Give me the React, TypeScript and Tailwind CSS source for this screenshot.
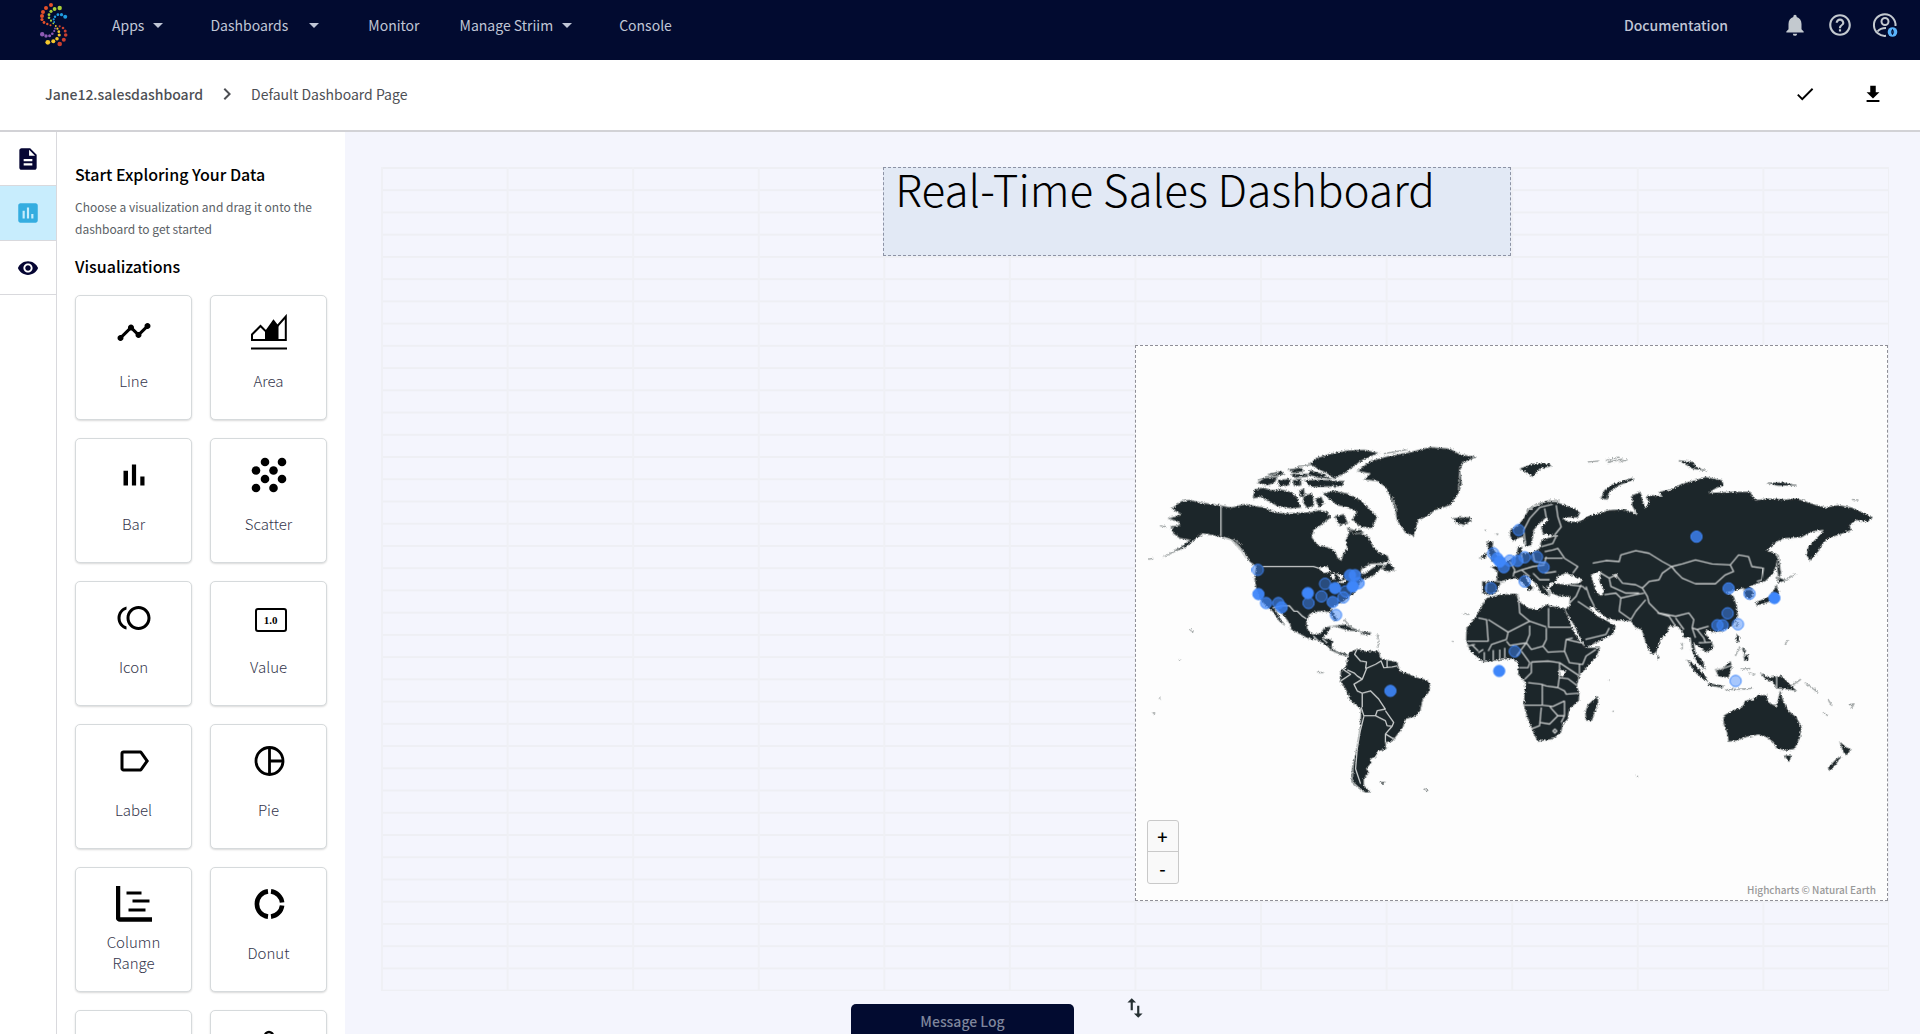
import React from 'react';
import {
  MdArrowDropDown,
  MdCheck,
  MdChevronRight,
  MdDescription,
  MdHelpOutline,
  MdInsertChart,
  MdLabelOutline,
  MdNotifications,
  MdSwapVert,
  MdTimeline,
  MdToll,
  MdVisibility,
} from 'react-icons/md';

const LOGO_DOTS: { color: string; dots: number[][] }[] = [
  { color: '#e4502a', dots: [[51, 5, 2], [46, 8, 2], [43, 12, 2], [42, 16, 2], [42, 19.5, 1.6], [44, 22.5, 1.4], [47.3, 24, 1.2], [50.5, 25.3, 1]] },
  { color: '#a9cf38', dots: [[59.7, 8, 2.2], [54.6, 9, 1.9], [51, 11.3, 1.6], [49, 14.7, 1.4], [49, 17.7, 1.3], [51, 20.7, 1.1], [53.3, 23.3, 0.9]] },
  { color: '#1f9be0', dots: [[65.2, 16.7, 2], [61.5, 14.7, 1.6], [57.9, 14.7, 1.4], [55, 16.7, 1.2], [53.7, 19.3, 1.1], [54.2, 22, 0.9]] },
  { color: '#8f5bb5', dots: [[42.2, 34.3, 2.2], [46, 36, 1.7], [49.6, 35.7, 1.5], [52.3, 33.7, 1.3], [54.2, 31, 1.1], [55, 28.5, 0.9]] },
  { color: '#f4c72c', dots: [[47.8, 42.3, 2.4], [53.3, 41.3, 2], [57, 38.7, 1.8], [59.2, 35, 1.6], [58.8, 31.7, 1.4], [57.4, 28.7, 1.1], [55.8, 26, 0.9]] },
  { color: '#c9402f', dots: [[59.7, 44, 2.3], [63.8, 39.7, 2], [65.7, 35, 1.8], [65.2, 31, 1.5], [63, 28, 1.3], [59.7, 26.3, 1.1]] },
];

function Logo() {
  return (
    <svg viewBox="39 2 29 45" className="h-[45px] w-[29px]" aria-hidden="true">
      {LOGO_DOTS.map((g) => (
        <g key={g.color} fill={g.color}>
          {g.dots.map(([x, y, r], i) => (
            <circle key={i} cx={x} cy={y} r={r} />
          ))}
        </g>
      ))}
    </svg>
  );
}

function NavItem({ label, menu, className = '' }: { label: string; menu?: boolean; className?: string }) {
  return (
    <button type="button" className={`flex items-center text-sm text-[#c0c6d6] ${className}`}>
      <span>{label}</span>
      {menu ? <MdArrowDropDown className="size-6" /> : null}
    </button>
  );
}

function UserIcon() {
  return (
    <svg viewBox="0 0 26 26" className="size-[26px]" fill="none" stroke="#c3c9cf" strokeWidth="2">
      <path d="M23.500 14A10.800 10.800 0 1 0 14 23.800" />
      <circle cx="13" cy="9.500" r="3.500" />
      <path d="M5.500 19.500c2-2.600 4.600-3.500 8.500-3.500" />
      <circle cx="20.500" cy="20" r="4.800" fill="#5ab4fb" stroke="none" />
      <path d="M20.500 16.800l-1.700 3h3.400zM20.500 23.200l1.700-3h-3.400z" fill="#020b30" stroke="none" />
    </svg>
  );
}

function TopBar() {
  return (
    <header className="flex h-[60px] shrink-0 items-center bg-[#020b30] pr-[22px] pb-[11px] pl-[39px]">
      <Logo />
      <nav className="flex items-center">
        <NavItem label="Apps" menu className="ml-11 gap-[2px]" />
        <NavItem label="Dashboards" menu className="ml-10 gap-[14px]" />
        <NavItem label="Monitor" className="ml-[42px]" />
        <NavItem label="Manage Striim" menu className="ml-10 gap-[2px]" />
        <NavItem label="Console" className="ml-10" />
      </nav>
      <a href="#docs" className="ml-auto text-sm font-medium text-[#c0c6d6]">
        Documentation
      </a>
      <div className="ml-[54px] flex items-center gap-[19px] text-[#c3c9cf]">
        <button type="button" aria-label="Notifications">
          <MdNotifications className="size-[26px]" />
        </button>
        <button type="button" aria-label="Help">
          <MdHelpOutline className="size-[26px]" />
        </button>
        <button type="button" aria-label="Account">
          <UserIcon />
        </button>
      </div>
    </header>
  );
}

function Breadcrumb() {
  return (
    <div className="flex h-[72px] shrink-0 items-center border-b-2 border-[#d2d2d6] bg-white pr-9 pb-[2px] pl-[45px] text-sm text-[#4d4f54]">
      <a href="#dashboard" className="font-medium">
        Jane12.salesdashboard
      </a>
      <MdChevronRight className="mx-3 size-6" />
      <span>Default Dashboard Page</span>
      <div className="ml-auto flex items-center gap-[46px] text-black">
        <button type="button" aria-label="Done">
          <MdCheck className="size-[22px]" />
        </button>
        <button type="button" aria-label="Download">
          <svg viewBox="0 0 24 24" className="size-[22px]" fill="currentColor">
            <path d="M19 10h-4V3H9v7H5l7 7 7-7zM5 18.500v2.200h14v-2.200H5z" />
          </svg>
        </button>
      </div>
    </div>
  );
}

function Rail() {
  return (
    <div className="w-[57px] shrink-0 border-r border-[#d9d9dd] bg-white text-[#050533]">
      <button type="button" aria-label="Pages" className="flex h-[54px] w-full items-center justify-center border-b border-[#d9d9dd]">
        <MdDescription className="size-[26px]" />
      </button>
      <button
        type="button"
        aria-label="Visualizations"
        className="flex h-[55px] w-full items-center justify-center border-b border-[#d9d9dd] bg-[#c8edfd] text-[#35ade0]"
      >
        <MdInsertChart className="size-[26px]" />
      </button>
      <button type="button" aria-label="Preview" className="flex h-[54px] w-full items-center justify-center border-b border-[#d9d9dd]">
        <MdVisibility className="size-[22px]" />
      </button>
    </div>
  );
}

const ICONS: Record<string, React.ReactNode> = {
  Line: <MdTimeline className="size-9" />,
  Area: (
    <svg viewBox="0 0 36 36" className="size-9" fill="none" stroke="currentColor" strokeWidth="2">
      <path d="M1 26V20.500L9.500 12l5.500 5.500L22.500 7l4 5L34.800 2.500V26z" />
      <path d="M14 26V18l8.500-11 5 5.500V26z" fill="currentColor" stroke="none" />
      <path d="M0 34.500h36" />
    </svg>
  ),
  Bar: (
    <svg viewBox="0 0 24 24" className="size-9" fill="currentColor">
      <path d="M5 9.200h3V19H5zM10.600 5h2.800v14h-2.800zM16.200 13H19v6h-2.800z" />
    </svg>
  ),
  Scatter: (
    <svg viewBox="0 0 36 36" className="size-9" fill="currentColor">
      {[[14, 5], [31, 5], [5, 13.5], [22.5, 13.5], [14, 22], [31, 22], [5, 31], [22.5, 31]].map(([x, y]) => (
        <circle key={`${x}-${y}`} cx={x} cy={y} r="4.300" />
      ))}
    </svg>
  ),
  Icon: <MdToll className="size-9" />,
  Value: (
    <span className="mt-1 ml-1 flex h-6 w-8 items-center justify-center rounded-[3px] border-2 border-black font-['Liberation_Serif',serif] text-[11px] font-bold">
      1.0
    </span>
  ),
  Label: <MdLabelOutline className="size-9" />,
  Pie: (
    <svg viewBox="0 0 36 36" className="size-9" fill="none" stroke="currentColor" strokeWidth="2.800">
      <circle cx="18.500" cy="18" r="13.500" />
      <path d="M18.500 4.500v27M18.500 18h13.500" />
    </svg>
  ),
  'Column Range': (
    <svg viewBox="0 0 36 36" className="size-9" fill="none" stroke="currentColor">
      <path d="M2 0v31.500a2 2 0 0 0 2 2h32" strokeWidth="4.500" />
      <path d="M10.500 7h15M16.500 15h17M12.500 24h17" strokeWidth="3" />
    </svg>
  ),
  Donut: (
    <svg viewBox="0 0 36 36" className="size-9" fill="none" stroke="currentColor" strokeWidth="4.600">
      <path d="M17 5.400a12.700 12.700 0 0 0 0 25.200M20 5.400a12.700 12.700 0 0 1 11.100 11.100M31.100 19.500a12.700 12.700 0 0 1-11.100 11.100" />
    </svg>
  ),
  Gauge: null,
  Leaflet: (
    <svg viewBox="0 0 36 36" className="size-9" fill="none" stroke="currentColor" strokeWidth="2.500">
      <circle cx="18" cy="7" r="4" />
      <path d="M18 11v12" />
    </svg>
  ),
};

const TILES = ['Line', 'Area', 'Bar', 'Scatter', 'Icon', 'Value', 'Label', 'Pie', 'Column Range', 'Donut', 'Gauge', 'Leaflet'];

function Tile({ name }: { name: string }) {
  const hidden = name === 'Gauge' || name === 'Leaflet';
  return (
    <button
      type="button"
      aria-label={name}
      className="flex h-[125px] flex-col items-center rounded-[5px] border border-[#d6dadc] bg-white pt-[18px] shadow-[0_1px_2px_rgba(0,0,0,0.15)]"
    >
      <span className="flex size-9 items-center justify-center text-black">{ICONS[name]}</span>
      {hidden ? null : (
        <span className="flex h-[60px] w-20 items-center justify-center text-[15px] leading-[21px] font-light text-[#34364c]">{name}</span>
      )}
    </button>
  );
}

function Sidebar() {
  return (
    <aside className="w-[288px] shrink-0 overflow-hidden bg-white px-[18px] pt-[30px]">
      <h2 className="text-base leading-6 font-medium text-black">Start Exploring Your Data</h2>
      <p className="mt-[10px] text-xs leading-[22px] text-[#5b5f66]">Choose a visualization and drag it onto the dashboard to get started</p>
      <h3 className="mt-[14px] text-base leading-6 font-medium text-black">Visualizations</h3>
      <div className="mt-[17px] grid grid-cols-2 gap-[18px]">
        {TILES.map((t) => (
          <Tile key={t} name={t} />
        ))}
      </div>
    </aside>
  );
}

// Land outlines, grouped by region; each group carries its own origin.
const LAND = [
  {
    at: 'translate(0 0)',
    shapes: [
      'M120 235L150 213L175 209L205 217L235 221L268 226L300 232L340 222L375 228L400 232L430 246L460 250L500 248L540 246L565 240L590 246L600 262L575 282L548 300L543 322L560 345L590 352L612 362L622 385L632 392L638 370L650 355L645 330L655 310L650 292L680 305L700 315L712 318L725 345L745 368L772 378L776 392L755 400L720 402L695 415L688 430L702 432L740 405L765 405L725 440L700 448L690 455L680 475L668 492L655 500L640 515L618 525L600 535L605 545L620 572L612 575L598 548L580 545L555 546L535 555L527 580L530 600L545 615L570 612L580 595L600 590L590 612L575 625L605 632L603 655L620 668L645 672L650 680L630 676L600 662L585 645L560 632L530 626L500 610L480 600L478 585L460 560L440 540L430 535L450 570L462 588L445 575L425 545L405 530L385 505L375 475L370 445L375 410L355 395L345 375L325 350L300 328L275 322L240 315L215 310L195 325L165 350L130 365L95 382L150 350L175 330L145 325L125 310L118 290L145 285L140 275L110 265L130 260L150 252L135 245Z',
      'M365 205L370 178L395 172L420 180L450 178L480 185L500 205L510 232L480 235L440 228L410 212L390 200Z',
      'M535 100L560 82L600 70L650 60L700 58L745 68L715 80L690 92L670 108L640 130L610 145L590 130L560 115Z',
      'M520 150L560 148L640 152L635 168L540 170Z',
      'M575 190L610 182L650 190L690 210L710 230L740 260L725 295L690 290L665 268L680 245L650 232L620 225L600 210Z',
      'M612 258L640 252L652 280L625 285Z',
      'M378 158L400 142L440 140L430 158L410 165ZM440 150L480 145L475 165L445 168ZM410 132L450 122L460 132L430 138ZM470 118L510 112L520 122L490 128ZM485 150L510 145L512 165L490 168ZM520 195L545 190L550 225L530 235L515 215ZM480 132L530 130L530 140L490 142ZM505 180L520 176L522 200L508 200ZM552 205L572 200L580 220L565 232ZM538 120L580 132L600 146L560 142L530 132ZM655 300L690 300L700 308L670 312Z',
      'M680 122L720 92L770 78L840 65L900 50L960 55L990 72L1040 80L1000 95L990 120L995 160L985 190L960 225L915 240L885 262L865 268L850 318L825 308L800 270L795 240L780 200L765 170L740 152L700 148L720 130Z',
      'M970 265L990 262L1020 262L1025 272L1000 285L978 278Z',
      'M605 590L640 585L690 605L650 603L620 592ZM690 606L722 610L718 616L692 614ZM755 418L775 396L794 420L775 426Z',
    ],
  },
  {
    at: 'translate(0 510)',
    shapes: [
      'M655 160L680 148L700 155L745 155L750 175L770 182L800 188L808 215L830 222L860 235L890 242L900 258L895 280L878 300L870 335L855 352L825 360L818 385L800 408L785 428L765 430L768 450L740 458L735 475L720 480L722 492L708 510L715 522L700 540L700 560L720 580L705 582L680 565L663 545L665 510L672 480L680 440L688 390L692 330L660 305L645 270L628 245L630 215L645 205L650 180Z',
      'M748 550L765 550L758 556ZM882 570L894 574L890 577Z',
    ],
  },
  {
    at: 'translate(960 0)',
    shapes: [
      'M180 315L182 300L205 285L222 265L235 242L265 225L290 215L320 215L345 225L375 235L392 248L385 262L350 262L340 265L355 275L385 275L400 270L415 258L440 252L480 240L520 238L550 245L565 255L548 225L550 195L575 185L580 210L590 235L600 215L590 200L610 195L640 200L630 185L665 178L700 160L740 150L770 140L820 150L825 165L800 175L780 188L850 185L905 185L920 210L960 205L1010 208L1045 205L1090 220L1130 232L1170 225L1210 232L1240 245L1275 262L1260 275L1225 270L1205 285L1210 300L1180 312L1140 325L1125 340L1110 365L1085 392L1075 375L1080 350L1100 330L1120 310L1125 300L1090 305L1060 322L1010 325L985 335L955 362L985 372L988 395L975 430L950 455L925 462L905 470L915 490L905 510L890 500L885 475L865 480L835 488L855 500L865 530L868 560L850 590L820 605L790 608L775 600L770 612L790 640L795 655L775 670L755 655L735 640L740 670L765 700L768 720L745 700L730 665L725 625L705 625L700 605L685 590L660 590L655 610L635 630L620 670L608 675L590 640L578 600L560 595L545 575L500 572L475 568L450 548L430 530L420 535L445 560L475 575L500 590L490 615L440 640L408 655L395 630L375 590L358 560L345 540L360 530L362 500L330 500L305 490L300 475L315 460L350 465L390 460L400 450L375 440L350 430L325 440L318 455L300 462L290 480L300 500L275 490L262 465L240 445L225 435L235 455L250 475L240 485L220 460L200 445L170 450L155 455L145 475L140 490L115 497L98 490L97 455L140 455L143 425L125 412L150 405L180 390L200 378L205 350L218 352L215 370L250 368L270 355L275 330L310 320L325 318L300 315L280 312L275 290L298 268L290 262L270 280L252 300L250 320L245 345L228 350L220 320L205 325L190 335Z',
      'M110 335L130 335L128 352L145 380L150 395L125 395L120 375ZM88 385L110 368L108 385Z',
      'M455 205L465 180L490 162L550 143L555 148L510 165L480 185L475 208Z',
      'M210 115L250 100L300 100L305 108L270 115L250 140L235 130ZM690 90L735 95L740 108L775 122L730 115ZM955 158L1000 156L1045 165L990 167Z',
      'M990 375L998 430L990 450L985 400ZM985 440L1012 452L990 460ZM985 465L992 490L970 514L925 528L922 518L965 500ZM625 675L632 685L626 690ZM868 575L862 592L870 588Z',
      'M865 615L873 622L870 640L862 632ZM880 655L892 662L888 680ZM885 680L898 675L900 692L888 694Z',
    ],
  },
  {
    at: 'translate(960 570)',
    shapes: [
      'M95 -40L110 -65L150 -75L200 -78L208 -55L235 -35L265 -30L290 -45L320 -38L345 -35L358 0L375 40L395 70L410 85L452 85L440 115L415 140L390 170L382 200L390 220L388 245L360 270L355 300L340 315L335 340L310 360L265 368L255 350L245 325L235 300L222 258L225 220L228 190L205 165L205 130L190 118L160 120L100 128L60 95L48 60L50 25L75 -5Z',
      'M445 230L447 250L428 305L410 305L408 280L415 258Z',
      'M825 290L850 275L880 265L890 245L915 240L930 228L955 228L960 250L985 262L995 215L1005 245L1020 275L1045 295L1060 325L1055 355L1040 390L1010 395L985 388L975 370L955 355L930 347L890 355L865 365L840 368L835 340L825 315Z',
      'M1008 410L1030 410L1022 430ZM1175 368L1195 385L1210 392L1195 410L1186 400ZM1180 412L1165 435L1145 457L1140 447L1165 420Z',
      'M935 160L960 175L1000 170L1020 190L1045 215L1015 210L985 208L975 190L950 178ZM800 150L820 150L845 125L850 140L840 175L810 172ZM715 122L740 138L770 170L778 188L760 178L735 155ZM778 192L825 200L822 206L780 199Z',
    ],
  },
];

const BORDERS = [
  {
    at: 'translate(0 0)',
    d: 'M269 226V318M395 410H548L565 415M275 322L300 330L330 362L345 385M425 535L450 528L475 528L490 545L500 545L515 560L527 568M548 620L560 632M575 628L590 640',
  },
  {
    at: 'translate(0 510)',
    d: 'M680 148L672 165L690 185L708 188L705 208M705 208L735 195L752 185L760 205L785 203L800 200M770 182V204M650 212L672 222L680 230L695 240L670 255L680 275L695 282M708 208L695 240M695 282L720 275L745 300L765 330L740 335L735 350L700 350L692 325M695 282V325M735 350L765 365L770 380L785 382L790 370L765 335M700 352L688 400L680 450L675 510L690 555M785 382L765 405L790 420M765 405V430M630 245L660 225L640 212',
  },
  {
    at: 'translate(960 0)',
    d: 'M430 400L470 392L510 395L515 375L560 362L600 370L640 395L668 410L640 430L630 450L600 455L580 475L560 465L520 460L500 435L480 445L455 430M668 410L700 402L740 390L790 402L845 405L855 425L830 435L800 462L740 462L700 445L680 425ZM845 405L870 375L900 380L910 410L945 415L940 450L925 455M580 475L595 500L600 520L630 550L680 560L720 550L735 570L730 595L745 600L780 590M410 470L420 500L435 530M465 495L500 490L515 505L510 545L545 570M515 505L560 495L585 490M545 570L560 545L590 510M360 520L380 500L395 465M385 515L430 545M408 630L470 615L480 595M480 445L485 470L530 490L570 490M228 345L222 300L240 265L270 232L310 222M285 235L290 262M320 225L325 260L335 290L315 315M275 350L310 340L320 318M285 365L310 360L325 355L345 385L385 410L370 430M285 385H340M250 370L255 395L285 400L290 380M215 372L220 400M190 430L215 420L250 410L285 405M285 430L320 425M140 455L165 458M110 458L108 490M180 395L195 420L190 440M215 420L240 440M250 430L270 450L300 450M730 595L740 625M745 600L765 625L770 640M750 640L785 638M625 550L660 560L680 590M680 565L705 600M360 465L400 470L410 480M885 480L915 478',
  },
  {
    at: 'translate(960 570)',
    d: 'M52 65H115L110 0L85 -5M115 0L175 38L240 5L210 -20L205 -78M240 5L290 22M297 25V-35M297 23H365M175 38L170 60L125 75L115 95M240 18V45L230 70L180 78L170 65M290 25V60L280 80L245 90L230 70M280 80L295 98L345 95L350 60L370 55M345 95L360 130L400 135L410 110L440 90M245 128L295 125L330 130V170L325 205L290 200L275 195L235 190M245 128V160L225 180M208 145H235L240 130M330 175L355 178L382 198M330 130L390 170M390 135V165M325 205L345 215L350 225L388 222M278 195V258L222 258M278 258L310 262L345 245M275 265L270 320L245 330M270 310L300 315L325 290H345M300 262L325 290M345 245V290L335 310M310 336l6 -6l6 6l-6 6zM65 75L85 95M85 100L100 90M103 98V125M130 92V125M150 90V120M165 85V118M200 110L215 90L230 70M215 95L240 130M50 80L75 75M350 60L395 70M985 172V208M800 152L830 145L848 138',
  },
];

const LAKES = [
  'M562 415L590 410L600 425L580 430ZM600 430L615 432L610 450L602 445ZM618 430L640 440L630 450ZM622 458L648 448L640 460Z',
  'M1385 435L1415 425L1410 455L1425 485L1415 498L1400 485ZM1452 435L1465 432L1460 445ZM1288 722L1310 724L1300 742L1290 738Z',
];

// Scattered islets too small to outline.
const ISLETS =
  'M85 287L105 291M50 388L64 386M175 600L186 608M142 690L146 692M82 806L86 808M64 852L70 854M560 730L578 730M740 615L746 640L740 655M640 570L668 600M1000 552L1018 555M966 635L969 637M1375 95L1410 92M1430 90L1470 80M1435 96L1480 86M1470 95L1495 88M1065 300L1070 302M1100 310L1104 316M965 262L975 270M1970 645L1978 632M1970 452L2003 432M1990 770L2018 750M2030 760L2070 790M2100 812L2112 830M2085 850L2100 860M2163 828L2178 824L2170 838M1520 1042L1528 1044M1438 753L1440 755M1450 846L1454 848M1820 680L1835 650M1835 720L1865 718M1860 730L1880 736M1790 782L1870 778M1660 640V660M2172 208L2192 210M1190 242L1220 222L1260 210L1290 210M305 325L330 345M312 338L335 365M668 1000L665 1060L700 1090M760 70L830 58M990 110L985 180M785 200L800 240M380 150L440 128M500 108L540 104M1255 480L1262 495M1240 470L1250 482';

const MARKERS: number[][] = [
  [380, 420, 0.5], [382, 493, 0.95], [405, 520, 0.7], [442, 520, 0.6], [452, 533, 0.8], [531, 490, 1], [533, 520, 0.5], [572, 500, 0.5],
  [583, 462, 0.4], [613, 475, 0.95], [606, 517, 0.7], [638, 503, 0.5], [645, 485, 0.4], [658, 436, 0.8], [673, 436, 0.8], [684, 460, 0.7],
  [666, 470, 1], [616, 556, 0.5], [780, 785, 0.9], [1108, 725, 1], [1155, 666, 0.5], [1167, 300, 0.5], [1090, 370, 0.5], [1102, 385, 0.8],
  [1110, 395, 1], [1122, 412, 0.7], [1140, 392, 0.6], [1163, 393, 0.7], [1185, 382, 0.5], [1222, 381, 0.5], [1242, 412, 0.6],
  [1185, 455, 0.5], [1083, 475, 0.5], [1703, 320, 0.8], [1800, 476, 0.7], [1863, 492, 0.5], [1938, 505, 1], [1797, 551, 0.5],
  [1766, 587, 0.6], [1782, 587, 0.6], [1828, 584, 0.45], [1821, 755, 0.45],
];

function WorldMap() {
  return (
    <svg viewBox="15 -255 2262 1671" className="size-full" role="img" aria-label="World map of sales">
      <defs>
        <filter id="coast" x="0" y="0" width="1" height="1">
          <feTurbulence type="fractalNoise" baseFrequency="0.16" numOctaves="3" seed="4" />
          <feDisplacementMap in="SourceGraphic" scale="10" xChannelSelector="R" yChannelSelector="G" />
        </filter>
      </defs>
      <g filter="url(#coast)" strokeLinejoin="round">
        {LAND.map((g) => (
          <g key={g.at} transform={g.at} fill="#1e2629" stroke="#a0a5a5" strokeWidth="3">
            {g.shapes.map((d, i) => (
              <path key={i} d={d} />
            ))}
          </g>
        ))}
        <g fill="#fdfdfd" stroke="#b5b8b8" strokeWidth="2">
          {LAKES.map((d, i) => (
            <path key={i} d={d} />
          ))}
        </g>
        <path d={ISLETS} fill="none" stroke="#9da2a2" strokeWidth="4" />
      </g>
      <g fill="none" stroke="#c9cccc" strokeWidth="4" strokeLinejoin="round">
        {BORDERS.map((b) => (
          <path key={b.at} transform={b.at} d={b.d} />
        ))}
      </g>
      <g fill="#3e86fa" stroke="#3e86fa" strokeWidth="3">
        {MARKERS.map(([x, y, o]) => (
          <circle key={`${x}-${y}`} cx={x} cy={y} r="17" fillOpacity={o} />
        ))}
      </g>
    </svg>
  );
}

function Canvas() {
  return (
    <main className="flex min-w-0 flex-1 flex-col bg-[#f4f5fd] pt-[35px] pr-[31px] pl-9">
      <div className="grid min-h-0 flex-1 grid-cols-12 grid-rows-[repeat(37,minmax(0,1fr))] border-r border-b border-[#eeeff4] bg-[linear-gradient(to_right,#eff0f5_2px,transparent_2px),linear-gradient(to_bottom,#eeeff4_2px,transparent_2px)] bg-[size:calc(100%/12)_100%,100%_calc(100%/37)]">
        <section className="col-span-5 col-start-5 row-span-4 row-start-1 border border-dashed border-[#8d93a5] bg-[#e2e9f5] pl-[11px]">
          <h1 className="text-[44px] leading-10 font-light whitespace-nowrap text-black">Real-Time Sales Dashboard</h1>
        </section>
        <section className="relative col-span-6 col-start-7 row-span-25 row-start-9 border border-dashed border-[#8f8f98] bg-[#fdfdfd]">
          <WorldMap />
          <div className="absolute bottom-4 left-[11px] flex w-8 flex-col rounded-[3px] border border-[#c9c9c9] bg-[#f9f9f9] text-lg font-medium text-black">
            <button type="button" className="flex h-[31px] items-center justify-center border-b border-[#c9c9c9]">
              +
            </button>
            <button type="button" className="flex h-[31px] items-center justify-center">
              -
            </button>
          </div>
          <a href="#credits" className="absolute right-[11px] bottom-[2px] text-[10px] leading-4 font-medium text-[#999]">
            Highcharts © Natural Earth
          </a>
        </section>
      </div>
      <div className="flex h-[43px] shrink-0 items-start pl-[470px]">
        <button
          type="button"
          className="mt-[13px] flex h-[30px] w-[223px] items-start justify-center rounded-t-[5px] bg-[#020b30] pt-[7px] text-sm leading-5 font-medium text-[#7f869c]"
        >
          Message Log
        </button>
        <button type="button" aria-label="Resize log" className="mt-1 ml-12 text-[#263033]">
          <MdSwapVert className="size-[26px]" />
        </button>
      </div>
    </main>
  );
}

export default function App() {
  return (
    <div className="flex h-screen min-w-[1200px] flex-col overflow-hidden bg-white font-['Noto_Sans_CJK_SC','Noto_Sans',sans-serif]">
      <TopBar />
      <Breadcrumb />
      <div className="flex min-h-0 flex-1">
        <Rail />
        <Sidebar />
        <Canvas />
      </div>
    </div>
  );
}
